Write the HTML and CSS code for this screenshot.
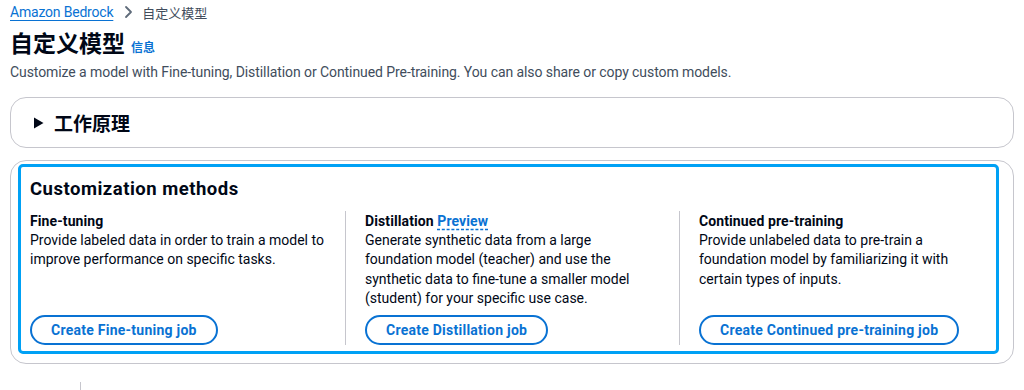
FILE: index.html
```html
<!DOCTYPE html>
<html lang="zh">
<head>
    <meta charset="UTF-8">
    <meta name="viewport" content="width=device-width, initial-scale=1.0">
    <title>自定义模型</title>
    <link rel="stylesheet" href="styles.css">
</head>

<body>
    <div class="page">
        <!-- Breadcrumbs -->
        <nav class="breadcrumbs">
            <a href="#" class="crumb-link">Amazon Bedrock</a>
            <svg class="crumb-sep" width="16" height="16" viewBox="0 0 16 16">
                <path d="M6 3l5 5-5 5" fill="none" stroke="#5f6b7a" stroke-width="1.8" stroke-linecap="round" stroke-linejoin="round"/>
            </svg>
            <span class="crumb-current">自定义模型</span>
        </nav>

        <!-- Header -->
        <div class="title-row">
            <h1>自定义模型</h1>
            <a href="#" class="info-link">信息</a>
        </div>
        <p class="description">Customize a model with Fine-tuning, Distillation or Continued Pre-training. You can also share or copy custom models.</p>

        <!-- How it works -->
        <div class="panel expander">
            <svg class="caret" width="12" height="14" viewBox="0 0 12 14">
                <path d="M1 1.5l9.5 5.5L1 12.5z" fill="#000716"/>
            </svg>
            <h2>工作原理</h2>
        </div>

        <!-- Customization methods -->
        <div class="panel methods-outer">
            <div class="methods">
                <h2 class="methods-title">Customization methods</h2>
                <div class="columns">
                    <div class="column">
                        <div class="column-title">Fine-tuning</div>
                        <p>Provide labeled data in order to train a model to improve performance on specific tasks.</p>
                        <button class="pill-button">Create Fine-tuning job</button>
                    </div>
                    <div class="column">
                        <div class="column-title">Distillation <a href="#" class="preview-link">Preview</a></div>
                        <p>Generate synthetic data from a large foundation model (teacher) and use the synthetic data to fine-tune a smaller model (student) for your specific use case.</p>
                        <button class="pill-button">Create Distillation job</button>
                    </div>
                    <div class="column">
                        <div class="column-title">Continued pre-training</div>
                        <p>Provide unlabeled data to pre-train a foundation model by familiarizing it with certain types of inputs.</p>
                        <button class="pill-button">Create Continued pre-training job</button>
                    </div>
                </div>
            </div>
        </div>

        <div class="tab-stub"></div>
    </div>
</body>

</html>
```

FILE: styles.css
```css
/* Basic page styling */
body {
    font-family: Roboto, "Noto Sans CJK SC", sans-serif;
    background-color: #ffffff;
    margin: 0;
    padding: 0;
    color: #000716;
}

.page {
    padding: 0 10px;
}

/* Breadcrumbs */
.breadcrumbs {
    display: flex;
    align-items: center;
    height: 24px;
    font-size: 14px;
}

.crumb-link {
    color: #0972d3;
    text-decoration: underline;
    text-underline-offset: 3px;
    letter-spacing: -0.2px;
}

.crumb-sep {
    margin: 0 6px 0 7px;
}

.crumb-current {
    color: #414d5c;
    font-size: 13px;
}

/* Title */
.title-row {
    display: flex;
    align-items: baseline;
    margin-top: 6px;
    height: 30px;
}

.title-row h1 {
    font-size: 23px;
    font-weight: 700;
    line-height: 30px;
    margin: 0;
}

.info-link {
    color: #0972d3;
    font-size: 12px;
    font-weight: 700;
    text-decoration: none;
    margin-left: 6px;
}

.description {
    font-size: 14px;
    line-height: 20px;
    color: #414d5c;
    letter-spacing: -0.08px;
    margin: 2px 0 0;
}

/* Panels */
.panel {
    border: 1px solid #c6c6cd;
    border-radius: 16px;
    background-color: white;
}

.expander {
    display: flex;
    align-items: center;
    height: 49px;
    margin-top: 15px;
    padding-left: 22px;
}

.expander h2 {
    font-size: 19px;
    font-weight: 700;
    margin: 0 0 0 9px;
}

.methods-outer {
    margin-top: 12px;
    padding: 3px 14px 9px 7px;
}

.methods {
    border: 3px solid #00a1f5;
    border-radius: 5px;
    padding: 10px 9px 6px;
}

.methods-title {
    font-size: 18.5px;
    font-weight: 700;
    line-height: 24px;
    letter-spacing: 0.5px;
    margin: 0 0 10px;
}

.columns {
    display: grid;
    grid-template-columns: 315px 334px 1fr;
}

.column {
    display: flex;
    flex-direction: column;
    align-items: flex-start;
    padding-right: 20px;
    font-size: 14px;
}

.column + .column {
    border-left: 1px solid #c6c6cd;
    padding-left: 19px;
}

.column-title {
    font-weight: 700;
    line-height: 20px;
    letter-spacing: 0.1px;
}

.preview-link {
    color: #0972d3;
    text-decoration: underline dashed;
    text-underline-offset: 3px;
}

.column p {
    margin: 0 0 6px;
    line-height: 19.4px;
}

.pill-button {
    margin-top: auto;
    height: 30px;
    padding: 0 19px;
    border: 2px solid #0972d3;
    border-radius: 20px;
    background-color: white;
    color: #0972d3;
    font-family: inherit;
    font-size: 14px;
    font-weight: 700;
    letter-spacing: 0.25px;
    cursor: pointer;
}

.tab-stub {
    width: 1px;
    height: 8px;
    margin: 18px 0 0 70px;
    background-color: #c6c6cd;
}
```
